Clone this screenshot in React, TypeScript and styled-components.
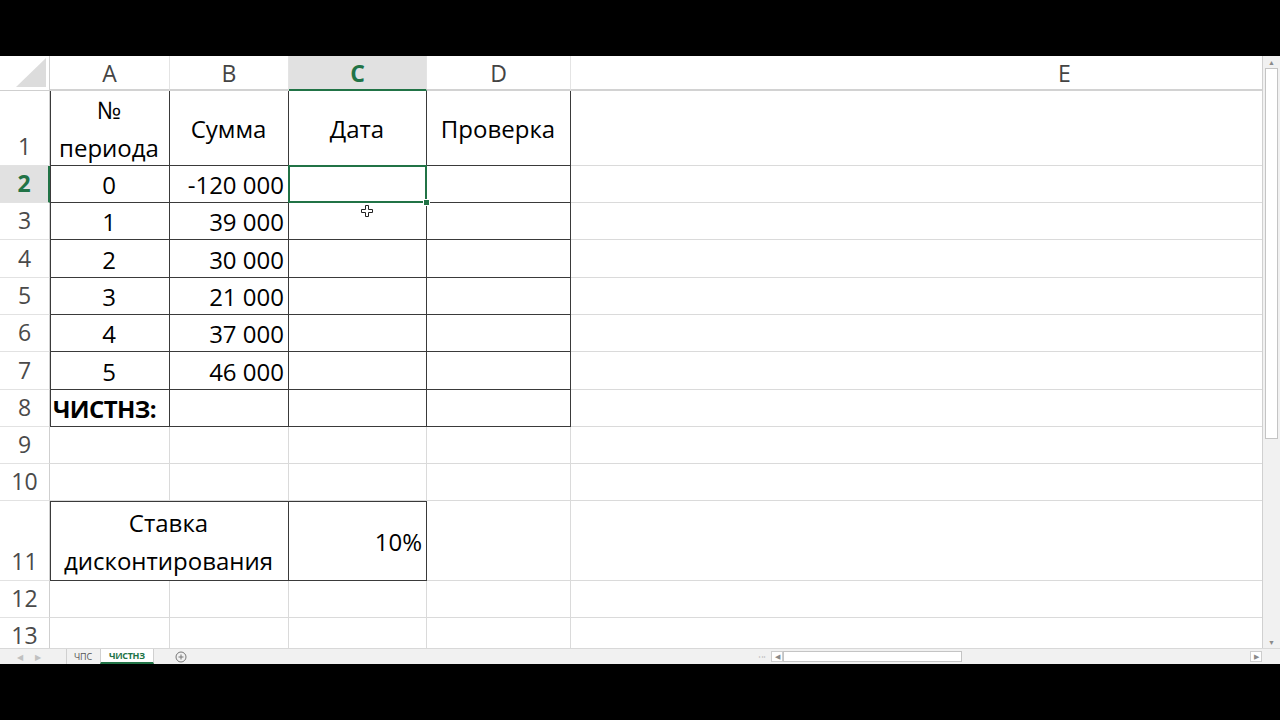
import styled, { createGlobalStyle, css } from 'styled-components';

const GlobalStyle = createGlobalStyle`
  html, body { margin: 0; padding: 0; background: #000; }
  body { font-family: "Open Sans", "Noto Sans", sans-serif; }
`;

const GREEN = '#217346';
const GRID_LINE = '#dadada';
const BOX_LINE = '#3a3a3a';

const Screen = styled.div`
  width: 1280px;
  height: 720px;
  display: flex;
  flex-direction: column;
  background: #000;
  overflow: hidden;
`;

const Letterbox = styled.div`
  height: 56px;
  flex: none;
  background: #000;
`;

const Workbook = styled.div`
  height: 608px;
  flex: none;
  display: flex;
  flex-direction: column;
  background: #fff;
`;

const Main = styled.div`
  height: 592px;
  display: flex;
`;

const SheetArea = styled.div`
  flex: 1;
  min-width: 0;
  position: relative;
  overflow: hidden;
  border-right: 1px solid #d0d0d0;
`;

const Sheet = styled.div<{ $rows: string }>`
  display: grid;
  grid-template-columns: 50px 120px 119px 138px 144px 988px;
  grid-template-rows: 35px ${p => p.$rows};
  font-size: 24px;
  color: #000;
`;

const Corner = styled.div`
  position: relative;
  border-right: 1px solid #cfcfcf;
  border-bottom: 1px solid #cfcfcf;
  &::after {
    content: '';
    position: absolute;
    right: 3px;
    bottom: 3px;
    width: 0;
    height: 0;
    border-left: 30px solid transparent;
    border-bottom: 29px solid #dcdcdc;
  }
`;

const ColHead = styled.div<{ $active?: boolean }>`
  display: flex;
  align-items: center;
  justify-content: center;
  color: #444;
  font-size: 23px;
  border-right: 1px solid #e4e4e4;
  border-bottom: 2px solid #d2d2d2;
  ${p => p.$active && css`
    background: #e1e1e1;
    color: ${GREEN};
    font-weight: 700;
    border-bottom-color: ${GREEN};
  `}
`;

const RowHead = styled.div<{ $active?: boolean }>`
  display: flex;
  align-items: flex-end;
  justify-content: center;
  line-height: 37px;
  color: #4a4a4a;
  font-size: 23px;
  border-right: 1px solid #cfcfcf;
  border-bottom: 1px solid #e2e2e2;
  ${p => p.$active && css`
    background: #e1e1e1;
    color: ${GREEN};
    font-weight: 700;
    border-right: 2px solid ${GREEN};
  `}
`;

type Align = 'left' | 'center' | 'right';

const Cell = styled.div<{
  $align?: Align;
  $bold?: boolean;
  $box?: boolean;
  $top?: boolean;
  $left?: boolean;
  $span?: number;
  $selected?: boolean;
}>`
  position: relative;
  display: flex;
  align-items: center;
  justify-content: ${p => (p.$align === 'right' ? 'flex-end' : p.$align === 'center' ? 'center' : 'flex-start')};
  text-align: ${p => p.$align || 'left'};
  padding: 2px 4px 0 3px;
  white-space: pre-line;
  line-height: 38px;
  font-weight: ${p => (p.$bold ? 700 : 400)};
  letter-spacing: ${p => (p.$bold ? '-0.6px' : '0')};
  grid-column: span ${p => p.$span || 1};
  border-right: 1px solid ${p => (p.$box ? BOX_LINE : GRID_LINE)};
  border-bottom: 1px solid ${p => (p.$box ? BOX_LINE : GRID_LINE)};
  box-shadow: ${p =>
    [p.$top && `inset 0 1px 0 ${BOX_LINE}`, p.$left && `inset 1px 0 0 ${BOX_LINE}`].filter(Boolean).join(', ') || 'none'};
  ${p => p.$selected && css`
    &::before {
      content: '';
      position: absolute;
      left: -1px;
      top: -1px;
      right: -1px;
      bottom: -1px;
      border: 2px solid ${GREEN};
      pointer-events: none;
    }
  `}
`;

const FillHandle = styled.span`
  position: absolute;
  right: -4px;
  bottom: -4px;
  width: 5px;
  height: 5px;
  background: ${GREEN};
  border: 1px solid #fff;
  z-index: 2;
`;

const Cursor = styled.svg`
  position: absolute;
  left: 361px;
  top: 149px;
  z-index: 3;
`;

const VScroll = styled.div`
  width: 17px;
  flex: none;
  display: flex;
  flex-direction: column;
  align-items: center;
  background: #f1f1f1;
`;

const ArrowBtn = styled.div`
  display: flex;
  align-items: center;
  justify-content: center;
  color: #8a8a8a;
  font-size: 7px;
  line-height: 1;
  flex: none;
`;

const VArrow = styled(ArrowBtn)`
  width: 13px;
  height: 12px;
`;

const VTrack = styled.div`
  flex: 1;
  width: 100%;
  display: flex;
  flex-direction: column;
  align-items: center;
`;

const VThumb = styled.div`
  width: 11px;
  height: 369px;
  background: #fff;
  border: 1px solid #c4c4c4;
`;

const TabBar = styled.div`
  height: 16px;
  display: flex;
  align-items: stretch;
  background: #f1f1f1;
  border-top: 1px solid #d8d8d8;
  box-sizing: border-box;
  font-size: 9px;
`;

const TabNav = styled.div`
  width: 66px;
  display: flex;
  align-items: center;
  gap: 12px;
  padding-left: 17px;
  box-sizing: border-box;
  color: #c0c0c0;
  font-size: 8px;
`;

const Tab = styled.div<{ $active?: boolean }>`
  display: flex;
  align-items: center;
  padding: 0 8px 0 7px;
  border-left: 1px solid #d0d0d0;
  color: #555;
  letter-spacing: -0.2px;
  ${p => p.$active && css`
    background: #fff;
    color: ${GREEN};
    font-weight: 700;
    border-bottom: 2px solid ${GREEN};
    border-right: 1px solid #d0d0d0;
    padding: 0 8px;
    letter-spacing: -0.3px;
  `}
`;

const AddSheet = styled.div`
  display: flex;
  align-items: center;
  margin-left: 21px;
`;

const Splitter = styled.div`
  margin-left: auto;
  width: 4px;
  display: flex;
  align-items: center;
  justify-content: center;
  color: #9a9a9a;
  font-size: 8px;
  letter-spacing: -1px;
  writing-mode: vertical-lr;
`;

const HScroll = styled.div`
  width: 491px;
  margin-left: 6px;
  display: flex;
  align-items: center;
`;

const HArrow = styled(ArrowBtn)`
  width: 12px;
  height: 11px;
  border: 1px solid #cdcdcd;
  box-sizing: border-box;
  background: #fff;
`;

const HTrack = styled.div`
  flex: 1;
  height: 11px;
  display: flex;
`;

const HThumb = styled.div`
  width: 179px;
  height: 11px;
  box-sizing: border-box;
  background: #fff;
  border: 1px solid #c4c4c4;
`;

const ScrollCorner = styled.div`
  width: 18px;
  flex: none;
`;

type CellSpec = {
  t?: string;
  a?: Align;
  bold?: boolean;
  box?: boolean;
  top?: boolean;
  left?: boolean;
  span?: number;
  selected?: boolean;
};

type RowSpec = { h: number; cells: CellSpec[] };

const num = (n: string, s: string, extra: CellSpec = {}): CellSpec[] => [
  { t: n, a: 'center', box: true, left: true },
  { t: s, a: 'right', box: true },
  { box: true, ...extra },
  { box: true },
  {},
];

const empty: CellSpec[] = [{}, {}, {}, {}, {}];

const rows: RowSpec[] = [
  {
    h: 75,
    cells: [
      { t: '№\nпериода', a: 'center', box: true, left: true },
      { t: 'Сумма', a: 'center', box: true },
      { t: 'Дата', a: 'center', box: true },
      { t: 'Проверка', a: 'center', box: true },
      {},
    ],
  },
  { h: 37, cells: num('0', '-120 000', { selected: true }) },
  { h: 37, cells: num('1', '39 000') },
  { h: 38, cells: num('2', '30 000') },
  { h: 37, cells: num('3', '21 000') },
  { h: 37, cells: num('4', '37 000') },
  { h: 38, cells: num('5', '46 000') },
  {
    h: 37,
    cells: [
      { t: 'ЧИСТНЗ:', a: 'left', bold: true, box: true, left: true },
      { box: true },
      { box: true },
      { box: true },
      {},
    ],
  },
  { h: 37, cells: empty },
  { h: 37, cells: empty },
  {
    h: 80,
    cells: [
      { t: 'Ставка\nдисконтирования', a: 'center', box: true, top: true, left: true, span: 2 },
      { t: '10%', a: 'right', box: true, top: true },
      {},
      {},
    ],
  },
  { h: 37, cells: empty },
  { h: 37, cells: empty },
];

const columns = ['A', 'B', 'C', 'D', 'E'];

export default function App() {
  return (
    <Screen>
      <GlobalStyle />
      <Letterbox />
      <Workbook>
        <Main>
          <SheetArea>
            <Sheet $rows={rows.map(r => `${r.h}px`).join(' ')}>
              <Corner />
              {columns.map(c => (
                <ColHead key={c} $active={c === 'C'}>{c}</ColHead>
              ))}
              {rows.map((row, i) => [
                <RowHead key={`h${i}`} $active={i === 1}>{i + 1}</RowHead>,
                ...row.cells.map((c, j) => (
                  <Cell
                    key={`c${i}-${j}`}
                    $align={c.a}
                    $bold={c.bold}
                    $box={c.box}
                    $top={c.top}
                    $left={c.left}
                    $span={c.span}
                    $selected={c.selected}
                  >
                    {c.t}
                    {c.selected && <FillHandle />}
                  </Cell>
                )),
              ])}
            </Sheet>
            <Cursor width="12" height="12" viewBox="0 0 12 12">
              <path
                d="M4.5 0.5h3v4h4v3h-4v4h-3v-4h-4v-3h4z"
                fill="#fff"
                stroke="#222"
                strokeWidth="1"
              />
            </Cursor>
          </SheetArea>
          <VScroll>
            <VArrow>▲</VArrow>
            <VTrack>
              <VThumb />
            </VTrack>
            <VArrow>▼</VArrow>
          </VScroll>
        </Main>
        <TabBar>
          <TabNav>
            <span>◀</span>
            <span>▶</span>
          </TabNav>
          <Tab>ЧПС</Tab>
          <Tab $active>ЧИСТНЗ</Tab>
          <AddSheet>
            <svg width="12" height="12" viewBox="0 0 12 12">
              <circle cx="6" cy="6" r="5" fill="none" stroke="#777" strokeWidth="1" />
              <path d="M6 3.5v5M3.5 6h5" stroke="#777" strokeWidth="1" />
            </svg>
          </AddSheet>
          <Splitter>⋮</Splitter>
          <HScroll>
            <HArrow>◀</HArrow>
            <HTrack>
              <HThumb />
            </HTrack>
            <HArrow>▶</HArrow>
          </HScroll>
          <ScrollCorner />
        </TabBar>
      </Workbook>
      <Letterbox />
    </Screen>
  );
}
